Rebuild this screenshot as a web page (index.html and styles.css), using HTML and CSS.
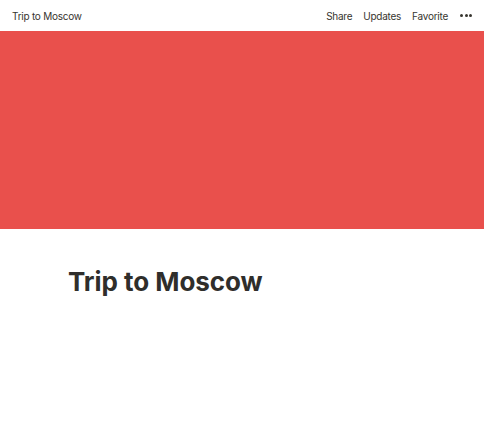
FILE: index.html
```html
<!DOCTYPE html>
<html>
<head>
<meta charset="utf-8">
<link rel="stylesheet" href="styles.css">
</head>
<body>
<header class="topbar">
  <div class="title">Trip to Moscow</div>
  <nav class="actions">
    <span>Share</span>
    <span>Updates</span>
    <span>Favorite</span>
    <span class="more"><i></i><i></i><i></i></span>
  </nav>
</header>
<div class="cover"></div>
<main class="content">
  <h1>Trip to Moscow</h1>
</main>
</body>
</html>
```
FILE: styles.css
```css
html, body { margin: 0; padding: 0; background: #fff; }
body { font-family: Inter, "Noto Sans", sans-serif; color: #37352f; }
.topbar {
  height: 31px;
  display: flex;
  align-items: center;
  justify-content: space-between;
  padding: 0 12px;
  font-size: 10px;
  letter-spacing: -0.25px;
  box-sizing: border-box;
}
.actions { display: flex; align-items: center; gap: 11px; }
.more { display: flex; gap: 1.5px; padding-left: 1px; }
.more i { width: 3px; height: 3px; border-radius: 50%; background: #37352f; display: block; }
.cover { height: 198px; background: #e9504c; }
.content { padding: 38px 68px 0; }
h1 {
  margin: 0;
  font-size: 26px;
  font-weight: 700;
  letter-spacing: -0.05px;
  line-height: 30px;
  color: #2f2e2b;
}
```
